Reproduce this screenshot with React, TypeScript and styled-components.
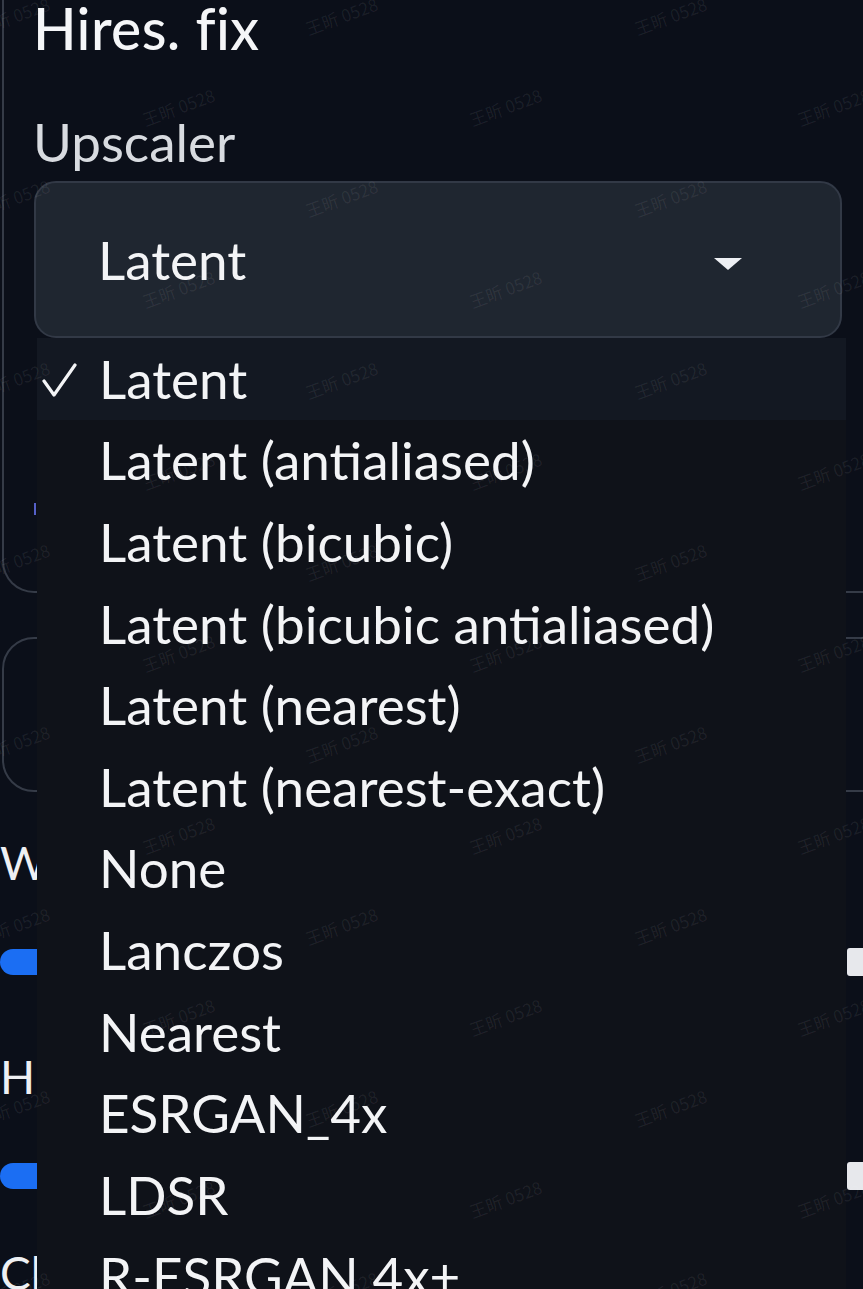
import React from "react";
import styled, { createGlobalStyle } from "styled-components";

const GlobalStyle = createGlobalStyle`
  html, body {
    margin: 0;
    padding: 0;
    background: #0b0f19;
  }
  * { box-sizing: border-box; }
`;

const FONT = `Lato, "Noto Sans", "Noto Sans CJK SC", sans-serif`;

const Page = styled.div`
  position: relative;
  width: 863px;
  height: 1289px;
  overflow: hidden;
  background: #0b0f19;
  font-family: ${FONT};
  color: #f3f4f6;
`;

const Panel = styled.div<{ $top: number; $height: number }>`
  width: 940px;
  height: ${(p) => p.$height}px;
  margin: ${(p) => p.$top}px 0 0 2px;
  border: 2px solid #353b47;
  border-radius: 32px 0 0 32px;
  padding: 0 0 0 30px;
`;

const TopPanel = styled(Panel)`
  border-top: none;
  border-radius: 0 0 0 32px;
  display: flex;
  flex-direction: column;
  align-items: flex-start;
`;

const Title = styled.div`
  margin-top: -2px;
  margin-left: -1px;
  font-size: 57px;
  line-height: 60px;
  font-weight: 500;
  letter-spacing: 0.4px;
  color: #f5f6f8;
`;

const FieldLabel = styled.div`
  margin-top: 54px;
  margin-left: -1px;
  font-size: 53px;
  line-height: 60px;
  color: #d8dbe0;
`;

const SelectBox = styled.div`
  margin-top: 9px;
  width: 808px;
  height: 157px;
  background: #1f2630;
  border: 2px solid #323946;
  border-radius: 22px;
  display: flex;
  align-items: center;
  justify-content: space-between;
  padding: 0 97px 0 62px;
  font-size: 53px;
  color: #f3f4f6;
`;

const Caret = styled.svg`
  margin-top: 8px;
  width: 30px;
  height: 14px;
`;

const Marker = styled.div`
  margin-top: 165px;
  width: 2px;
  height: 12px;
  background: #5560c8;
`;

const SliderBlock = styled.div<{ $top: number }>`
  margin-top: ${(p) => p.$top}px;
  display: flex;
  flex-direction: column;
`;

const SliderLabel = styled.div`
  font-size: 46px;
  line-height: 50px;
  color: #eef0f3;
  display: flex;
  align-items: center;
  gap: 4px;
  white-space: nowrap;
`;

const Tick = styled.span`
  width: 2px;
  height: 10px;
  margin-top: 4px;
  background: #9ca3af;
`;

const TrackRow = styled.div`
  margin-top: 61px;
  display: flex;
  justify-content: space-between;
  align-items: center;
  width: 863px;
  height: 26px;
`;

const TrackFill = styled.div`
  width: 37px;
  height: 26px;
  background: #1b6ef3;
  border-radius: 13px 0 0 13px;
`;

const NumberEdge = styled.div`
  width: 16px;
  height: 28px;
  background: #e7e8ec;
  border-radius: 3px 0 0 3px;
`;

const Dropdown = styled.ul`
  position: absolute;
  top: 338px;
  left: 37px;
  width: 809px;
  bottom: 0;
  margin: 0;
  padding: 0;
  list-style: none;
  background: #0f1219;
`;

const Option = styled.li<{ $active?: boolean }>`
  height: 81.6px;
  display: flex;
  align-items: center;
  gap: 22px;
  padding-left: 4px;
  font-size: 53px;
  line-height: 64px;
  white-space: nowrap;
  color: #f3f4f6;
  background: ${(p) => (p.$active ? "#131822" : "transparent")};
`;

const CheckSlot = styled.span`
  width: 36px;
  height: 40px;
  display: flex;
  align-items: center;
  justify-content: center;
  margin-top: 2px;
`;

const WatermarkLayer = styled.div`
  position: absolute;
  inset: 0;
  pointer-events: none;
`;

const Watermark = styled.span`
  position: absolute;
  width: 100px;
  font-family: "Noto Sans CJK SC", "Noto Sans", sans-serif;
  font-size: 17px;
  line-height: 20px;
  white-space: nowrap;
  color: rgba(255, 255, 255, 0.07);
  transform: rotate(-20deg);
`;

const OPTIONS = [
  "Latent",
  "Latent (antialiased)",
  "Latent (bicubic)",
  "Latent (bicubic antialiased)",
  "Latent (nearest)",
  "Latent (nearest-exact)",
  "None",
  "Lanczos",
  "Nearest",
  "ESRGAN_4x",
  "LDSR",
  "R-ESRGAN 4x+",
];

const marks: { x: number; y: number }[] = [];
for (let r = 0; r < 15; r++) {
  const xs = r % 2 === 0 ? [20, 348, 677] : [185, 512, 840];
  xs.forEach((x) => marks.push({ x, y: 12 + 91 * r }));
}

export default function App() {
  return (
    <>
      <GlobalStyle />
      <Page>
        <TopPanel $top={0} $height={593}>
          <Title>Hires. fix</Title>
          <FieldLabel>Upscaler</FieldLabel>
          <SelectBox>
            <span>Latent</span>
            <Caret viewBox="0 0 30 14">
              <path d="M1 1 L29 1 L15 13 Z" fill="#eef0f4" />
            </Caret>
          </SelectBox>
          <Marker />
        </TopPanel>
        <Panel $top={44} $height={155} />
        <SliderBlock $top={46}>
          <SliderLabel>Width</SliderLabel>
          <TrackRow>
            <TrackFill />
            <NumberEdge />
          </TrackRow>
        </SliderBlock>
        <SliderBlock $top={77}>
          <SliderLabel>
            H<Tick />
          </SliderLabel>
          <TrackRow>
            <TrackFill />
            <NumberEdge />
          </TrackRow>
        </SliderBlock>
        <SliderBlock $top={59}>
          <SliderLabel>Clip skip</SliderLabel>
        </SliderBlock>

        <Dropdown>
          {OPTIONS.map((o, i) => (
            <Option key={o} $active={i === 0}>
              <CheckSlot>
                {i === 0 && (
                  <svg width="36" height="38" viewBox="0 0 36 38">
                    <path
                      d="M3 20 L13 34 L34 4"
                      fill="none"
                      stroke="#f3f4f6"
                      strokeWidth="3.2"
                      strokeLinecap="round"
                      strokeLinejoin="round"
                    />
                  </svg>
                )}
              </CheckSlot>
              {o}
            </Option>
          ))}
        </Dropdown>

        <WatermarkLayer>
          {marks.map((m, i) => (
            <Watermark key={i} style={{ left: m.x - 45, top: m.y - 10 }}>
              王昕 0528
            </Watermark>
          ))}
        </WatermarkLayer>
      </Page>
    </>
  );
}
